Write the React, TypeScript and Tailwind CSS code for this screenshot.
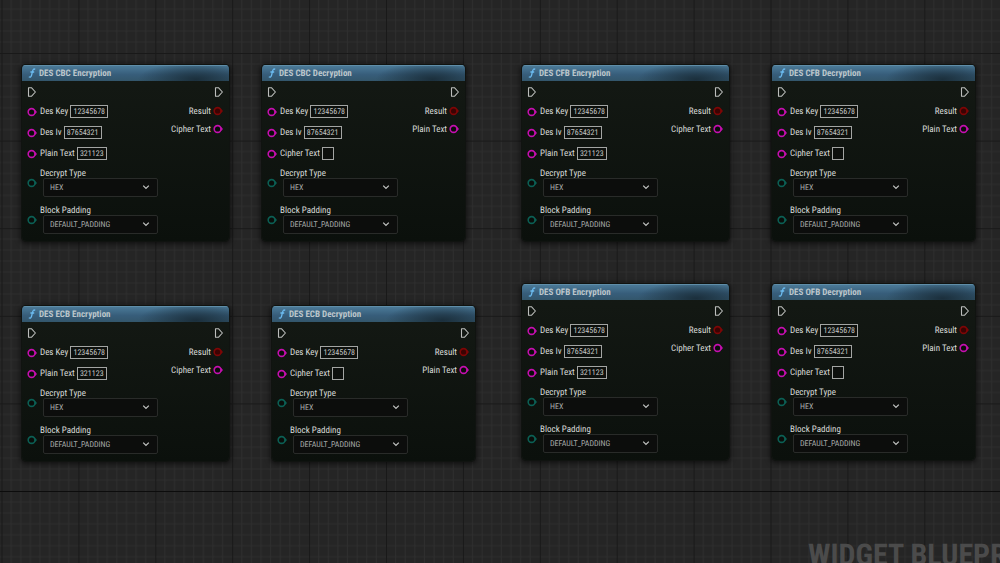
import React, { useId } from 'react';

interface Field {
  label: string;
  value: string;
}

interface NodeData {
  title: string;
  fields: Field[];
  output: string;
  // position on the graph canvas
  place: string;
}

const key: Field = { label: 'Des Key', value: '12345678' };
const iv: Field = { label: 'Des Iv', value: '87654321' };
const plain: Field = { label: 'Plain Text', value: '321123' };
const cipher: Field = { label: 'Cipher Text', value: '' };

const nodes: NodeData[] = [
  { title: 'DES CBC Encryption', fields: [key, iv, plain], output: 'Cipher Text', place: 'left-[22px] top-[65px] w-[207px]' },
  { title: 'DES CBC Decryption', fields: [key, iv, cipher], output: 'Plain Text', place: 'left-[262px] top-[65px] w-[203px]' },
  { title: 'DES CFB Encryption', fields: [key, iv, plain], output: 'Cipher Text', place: 'left-[522px] top-[65px] w-[207px]' },
  { title: 'DES CFB Decryption', fields: [key, iv, cipher], output: 'Plain Text', place: 'left-[772px] top-[65px] w-[203px]' },
  { title: 'DES ECB Encryption', fields: [key, plain], output: 'Cipher Text', place: 'left-[22px] top-[306px] w-[207px]' },
  { title: 'DES ECB Decryption', fields: [key, cipher], output: 'Plain Text', place: 'left-[272px] top-[306px] w-[203px]' },
  { title: 'DES OFB Encryption', fields: [key, iv, plain], output: 'Cipher Text', place: 'left-[522px] top-[284px] w-[207px]' },
  { title: 'DES OFB Decryption', fields: [key, iv, cipher], output: 'Plain Text', place: 'left-[772px] top-[284px] w-[203px]' },
];

const pinColors = {
  string: 'text-[#c40fae]',
  bool: 'text-[#7d0606]',
  enum: 'text-[#0b5f54]',
};

const Pin: React.FC<{ kind: keyof typeof pinColors }> = ({ kind }) => (
  <svg viewBox="0 0 10 10" className={`size-2.5 shrink-0 ${pinColors[kind]}`} aria-hidden="true">
    <circle cx="4.6" cy="5" r="3.4" fill={kind === 'bool' ? '#3a0303' : '#0a0d0a'} stroke="currentColor" strokeWidth="1.6" />
    <path d="M7.6 2.6 L10 5 L7.6 7.4 Z" fill="currentColor" />
  </svg>
);

const ExecPin: React.FC = () => (
  <svg viewBox="0 0 10 10" className="size-2.5 shrink-0" aria-hidden="true">
    <path d="M1.5 0.7 H4.4 L8.4 5 L4.4 9.3 H1.5 Z" fill="none" stroke="#bcbebc" strokeWidth="1.1" strokeLinejoin="round" />
  </svg>
);

const FieldRow: React.FC<{ field: Field }> = ({ field }) => {
  const id = useId();
  const width = field.value.length === 8 ? 'w-[38px]' : field.value.length === 6 ? 'w-[30px]' : 'w-3';
  return (
    <div className="flex h-[21px] items-center">
      <Pin kind="string" />
      <label htmlFor={id} className="pt-0.5 pr-0.5 pl-[3px] leading-[11px]">{field.label}</label>
      <input
        id={id}
        type="text"
        defaultValue={field.value}
        className={`h-[13px] border border-[#a3a5a3] bg-[#0d100d] text-center text-[8px] leading-none text-[#c4c6c4] outline-none [text-rendering:geometricPrecision] ${width}`}
      />
    </div>
  );
};

const SelectRow: React.FC<{ label: string; value: string }> = ({ label, value }) => {
  const id = useId();
  return (
    <div className="flex items-center gap-[3px]">
      <Pin kind="enum" />
      <div>
        <label htmlFor={id} className="block h-2.5 pt-px leading-[10px]">{label}</label>
        <div className="relative ml-[3px] h-[19px] w-[115px]">
          <select
            id={id}
            defaultValue={value}
            className="block size-full appearance-none rounded-xs border border-[#292b29] bg-[#0c0d0c] pl-1.5 text-[8px] leading-none text-[#a9aba9] outline-none [text-rendering:geometricPrecision]"
          >
            <option>{value}</option>
          </select>
          <svg viewBox="0 0 8 8" className="pointer-events-none absolute top-[5px] right-2 size-2" aria-hidden="true">
            <path d="M1.2 2.6 L4 5.4 L6.8 2.6" fill="none" stroke="#c0c2c0" strokeWidth="1.3" />
          </svg>
        </div>
      </div>
    </div>
  );
};

const OutputRow: React.FC<{ label: string; kind: keyof typeof pinColors }> = ({ label, kind }) => (
  <div className="flex h-[18px] items-center gap-0.5">
    <span className="pt-0.5 leading-[11px]">{label}</span>
    <Pin kind={kind} />
  </div>
);

const GraphNode: React.FC<{ node: NodeData }> = ({ node }) => (
  <section className={`absolute overflow-hidden rounded bg-linear-to-b from-[#141914] to-[#0b100c] shadow-[0_0_0_1px_#101310,0_1px_5px_2px_rgba(0,0,0,0.55)] ${node.place}`}>
    <header className="flex h-4 items-center gap-[3px] bg-[radial-gradient(ellipse_28%_110%_at_84%_90%,#1b2f3c,transparent),linear-gradient(to_bottom,#4d7d9b,#375d7a_60%,#33566b)] pl-1.5 shadow-[inset_0_1px_0_#5f8da8]">
      <svg viewBox="0 0 8 10" className="h-2.5 w-2 shrink-0" aria-hidden="true">
        <path d="M7.2 1.4 C5.6 0.4 4.9 1.6 4.5 3.4 L3.6 7.2 C3.2 8.9 2.3 9.6 0.8 8.8 M2.4 4 H6.2" fill="none" stroke="#6cbcf0" strokeWidth="1.3" />
      </svg>
      <h2 className="pt-0.5 text-[9px] leading-[11px] font-bold text-[#bcc6cb]">{node.title}</h2>
    </header>
    <div className="px-[5px] pb-[7px] text-[9px] leading-none text-[#d8dad8]">
      <div className="flex h-5 items-center justify-between pt-0.5">
        <ExecPin />
        <ExecPin />
      </div>
      <div className="flex justify-between">
        <div>
          {node.fields.map(f => <FieldRow key={f.label} field={f} />)}
        </div>
        <div className="flex flex-col items-end pt-px pr-px">
          <OutputRow label="Result" kind="bool" />
          <OutputRow label={node.output} kind="string" />
        </div>
      </div>
      <div className="mt-1 flex flex-col gap-2">
        <SelectRow label="Decrypt Type" value="HEX" />
        <SelectRow label="Block Padding" value="DEFAULT_PADDING" />
      </div>
    </div>
  </section>
);

const steps = [1, 2, 3, 4, 5, 6, 7];

const Grid: React.FC = () => (
  <svg className="absolute inset-0 size-full" aria-hidden="true">
    <defs>
      <pattern id="grid" x="1.5" y="53" width="76.9" height="87.6" patternUnits="userSpaceOnUse">
        {steps.map(i => (
          <path key={i} d={`M${i * 9.61} 0 V87.6 M0 ${i * 10.95} H76.9`} stroke="#2e2e2e" strokeWidth="1" />
        ))}
        <path d="M0 0 V87.6 M0 0 H76.9" stroke="#191919" strokeWidth="2" />
      </pattern>
    </defs>
    <rect width="100%" height="100%" fill="url(#grid)" />
    <path d="M0 491.5 H4000" stroke="#0c0c0c" strokeWidth="1" />
  </svg>
);

const App: React.FC = () => {
  return (
    <main className="relative h-screen overflow-hidden bg-[#252525] font-['Roboto_Condensed','Liberation_Sans_Narrow',Roboto,sans-serif] [text-rendering:geometricPrecision]">
      <Grid />
      {nodes.map(node => <GraphNode key={node.title} node={node} />)}
      <div className="absolute top-[538px] left-[808px] text-[30px] leading-9 font-bold whitespace-nowrap text-[#4b4b4b]">
        WIDGET BLUEPRINT
      </div>
    </main>
  );
};

export default App;
